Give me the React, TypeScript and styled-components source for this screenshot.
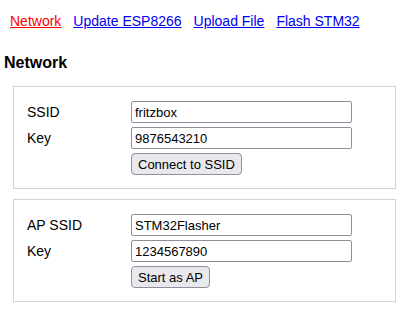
import React from "react";
import styled, { createGlobalStyle } from "styled-components";

const GlobalStyle = createGlobalStyle`
  body {
    margin: 0;
    background: #ffffff;
    font-family: "Liberation Sans", Arial, sans-serif;
    font-size: 14px;
    color: #000;
  }
`;

interface Field {
  label: string;
  value: string;
}

interface Section {
  fields: Field[];
  action: string;
}

const sections: Section[] = [
  {
    fields: [
      { label: "SSID", value: "fritzbox" },
      { label: "Key", value: "9876543210" },
    ],
    action: "Connect to SSID",
  },
  {
    fields: [
      { label: "AP SSID", value: "STM32Flasher" },
      { label: "Key", value: "1234567890" },
    ],
    action: "Start as AP",
  },
];

const links = ["Network", "Update ESP8266", "Upload File", "Flash STM32"];

const App: React.FC = () => {
  return (
    <Page>
      <GlobalStyle />
      <Nav>
        {links.map((l, i) => (
          <NavLink key={l} href="#" $active={i === 0}>
            {l}
          </NavLink>
        ))}
      </Nav>
      <Title>Network</Title>
      {sections.map((s, i) => (
        <Box key={i}>
          {s.fields.map((f) => (
            <React.Fragment key={f.label}>
              <Label>{f.label}</Label>
              <Input type="text" defaultValue={f.value} />
            </React.Fragment>
          ))}
          <Spacer />
          <ActionRow>
            <Button type="button">{s.action}</Button>
          </ActionRow>
        </Box>
      ))}
    </Page>
  );
};

export default App;

const Page = styled.div`
  padding: 0 4px;
`;

const Nav = styled.nav`
  display: flex;
  gap: 12px;
  padding: 13px 0 0 6px;
  line-height: 16px;
`;

const NavLink = styled.a<{ $active?: boolean }>`
  color: ${(p) => (p.$active ? "#ff0000" : "#0000ee")};
  text-decoration: underline;
  font-size: 14px;
`;

const Title = styled.h2`
  font-size: 16px;
  font-weight: bold;
  margin: 25px 0 14px 0;
  line-height: 18px;
`;

const Box = styled.div`
  display: grid;
  grid-template-columns: 104px 221px;
  row-gap: 4px;
  align-items: center;
  width: 383px;
  box-sizing: border-box;
  margin: 10px 0 0 9px;
  padding: 14px 13px 13px 13px;
  border: 1px solid #d4d4d4;
`;

const Label = styled.label`
  font-size: 14px;
  line-height: 16px;
`;

const Input = styled.input`
  box-sizing: border-box;
  width: 221px;
  height: 22px;
  margin: 0;
  padding: 0 3px;
  border: 1px solid #8f8f9d;
  border-radius: 2px;
  font-family: "Liberation Sans", Arial, sans-serif;
  font-size: 13px;
  color: #000;
  background: #fff;
`;

const Spacer = styled.div``;

const ActionRow = styled.div`
  display: flex;
`;

const Button = styled.button`
  box-sizing: border-box;
  height: 22px;
  padding: 0 6px;
  border: 1px solid #8f8f9d;
  border-radius: 4px;
  background: #e9e9ed;
  font-family: "Liberation Sans", Arial, sans-serif;
  font-size: 13px;
  color: #000;
`;
